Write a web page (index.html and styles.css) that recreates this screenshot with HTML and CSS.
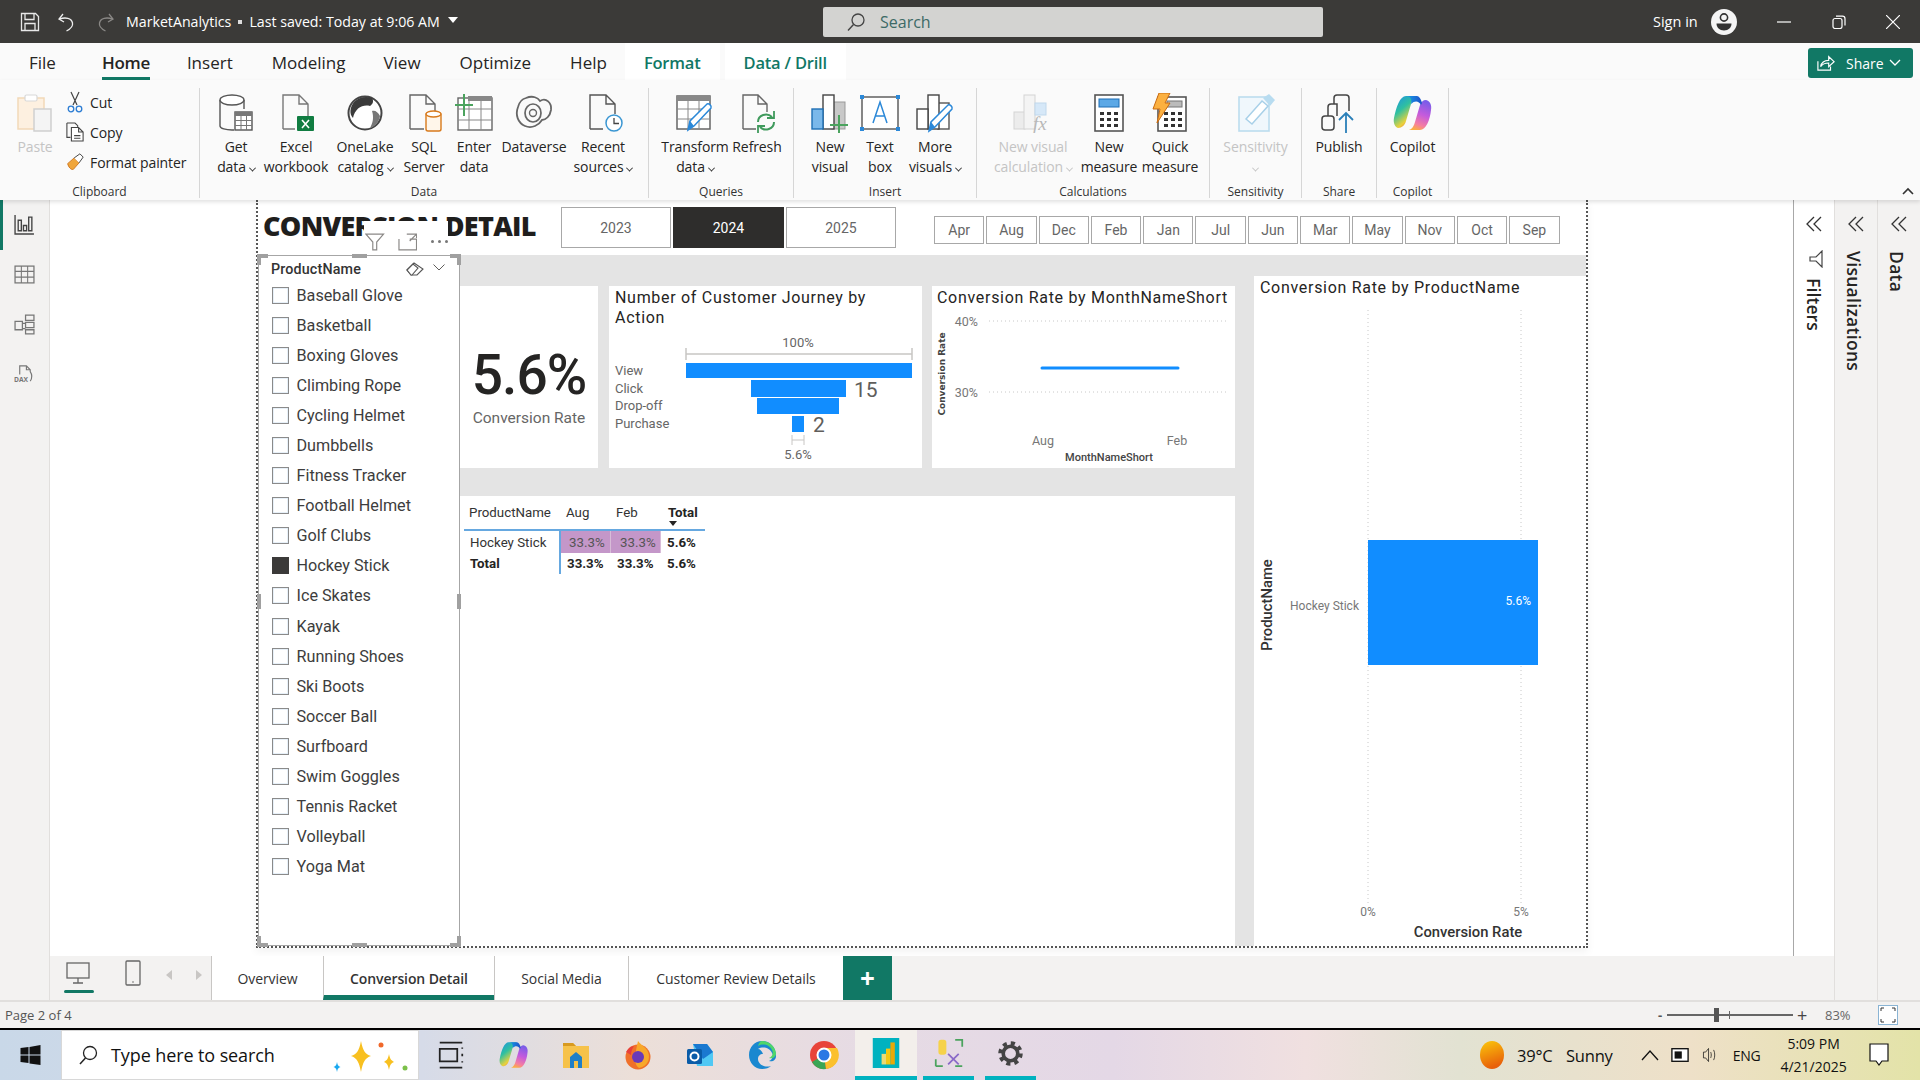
FILE: index.html
```html
<!DOCTYPE html>
<html lang="en">
<head>
<meta charset="utf-8">
<title>MarketAnalytics</title>
<link rel="stylesheet" href="styles.css">
</head>
<body>
<svg class="defs" width="0" height="0" aria-hidden="true">
  <defs>
    <linearGradient id="cpL" x1="0" y1="0" x2="0.6" y2="1"><stop offset="0" stop-color="#1b8fe8"/><stop offset=".45" stop-color="#2fc0a0"/><stop offset=".8" stop-color="#e9d23c"/><stop offset="1" stop-color="#f0713a"/></linearGradient>
    <linearGradient id="cpR" x1="0.6" y1="0" x2="0.3" y2="1"><stop offset="0" stop-color="#7a5ce8"/><stop offset=".45" stop-color="#c55bdc"/><stop offset=".8" stop-color="#f57fa0"/><stop offset="1" stop-color="#fbb040"/></linearGradient>
    <linearGradient id="cpT" x1="0" y1="0" x2="1" y2="0"><stop offset="0" stop-color="#16a0e8"/><stop offset="1" stop-color="#1e50c8"/></linearGradient>
    <linearGradient id="sun" x1="0" y1="0" x2="0.3" y2="1"><stop offset="0" stop-color="#fbc80a"/><stop offset="1" stop-color="#e8600a"/></linearGradient>
    <symbol id="copilot" viewBox="0 0 40 40">
      <path d="M13 3h11c-3 1-5 4-6 8l-5 17c-1 4-4 7-8 7-3-1-5-5-4-10C3 14 7 3 13 3z" fill="url(#cpL)"/>
      <path d="M27 37H16c3-1 5-4 6-8l5-17c1-3 3-5 6-5 4 1 6 5 5 10-1 10-5 20-11 20z" fill="url(#cpR)"/>
      <path d="M13 3h11c2 0 4 3 5 7l-1 2c-2-4-6-5-10-1 1-4 0-8-5-8z" fill="url(#cpT)"/>
    </symbol>
  </defs>
</svg>
<div class="app">

  <header class="titlebar">
    <div class="tb-left">
      <svg class="ti ti-save" viewBox="0 0 20 20"><path d="M1.5 1.5h14l3 3v14h-17z M5 1.5v6h9v-6 M5 18.5v-7h10v7" fill="none" stroke="#e8e8e8" stroke-width="1.3"/></svg>
      <svg class="ti ti-undo" viewBox="0 0 20 20"><path d="M6 2 2 7l5 3 M2.5 7c6-2 12-1 13 4 .6 3-2 6-6 8" fill="none" stroke="#eee" stroke-width="1.3"/></svg>
      <svg class="ti ti-redo" viewBox="0 0 20 20"><path d="M14 2l4 5-5 3 M17.500 7c-6-2-12-1-13 4-.6 3 2 6 6 8" fill="none" stroke="#8a8886" stroke-width="1.3"/></svg>
      <span class="doc-title">MarketAnalytics<i class="dot"></i>Last saved: Today at 9:06 AM</span>
      <i class="caret"></i>
    </div>
    <div class="searchbox">
      <svg class="search-ic" viewBox="0 0 20 20"><circle cx="12" cy="8" r="6" fill="none" stroke="#444" stroke-width="1.3"/><path d="M7.500 12.500 2 18.500" stroke="#444" stroke-width="1.4"/></svg>
      <span>Search</span>
    </div>
    <div class="tb-right">
      <span class="signin">Sign in</span>
      <svg class="avatar" viewBox="0 0 26 26"><circle cx="13" cy="13" r="13" fill="#f5f5f5"/><circle cx="13" cy="8.500" r="3.600" fill="none" stroke="#333" stroke-width="1.600"/><path d="M5.500 14.500h15c0 4-3 7-7.500 7s-7.500-3-7.500-7z" fill="#333"/></svg>
      <svg class="win win-min" viewBox="0 0 14 14"><path d="M0 7h14" stroke="#fff" stroke-width="1.200"/></svg>
      <svg class="win win-res" viewBox="0 0 14 14"><rect x="1" y="3.500" width="9" height="10" rx="2" fill="none" stroke="#fff" stroke-width="1.200"/><path d="M4 1.200h6.500c1.500 0 2.500 1 2.500 2.500v6.800" fill="none" stroke="#fff" stroke-width="1.200"/></svg>
      <svg class="win win-cls" viewBox="0 0 14 14"><path d="M0 0l14 14M14 0 0 14" stroke="#fff" stroke-width="1.200"/></svg>
    </div>
  </header>

  <nav class="tabs">
    <span class="tab t-file">File</span>
    <span class="tab t-home">Home</span>
    <span class="tab">Insert</span>
    <span class="tab t-mod">Modeling</span>
    <span class="tab">View</span>
    <span class="tab">Optimize</span>
    <span class="tab t-help">Help</span>
    <span class="tab t-ctx">Format</span>
    <span class="tab t-ctx">Data / Drill</span>
    <span class="share">
      <svg viewBox="0 0 20 20"><path d="M1 8v10h14v-4" fill="none" stroke="#fff" stroke-width="1.300"/><path d="M4 14c1-5 5-7 9-7V3l6 5.500L13 14v-4c-4 0-7 1-9 4z" fill="none" stroke="#fff" stroke-width="1.300"/></svg>
      <b>Share</b>
      <svg class="share-chev" viewBox="0 0 12 8"><path d="M1 1l5 5 5-5" fill="none" stroke="#fff" stroke-width="1.300"/></svg>
    </span>
  </nav>

  <section class="ribbon">
    <div class="group g-clip">
      <div class="btns clip-btns">
        <div class="rb w48 disabled">
          <svg class="ri" viewBox="0 0 40 40"><rect x="3" y="5" width="26" height="31" fill="#fdf0e0" stroke="#f2d9b8" stroke-width="1.500"/><rect x="10" y="2" width="12" height="6" rx="1.500" fill="#fff" stroke="#d8d8d8" stroke-width="1.200"/><rect x="19" y="16" width="17" height="22" fill="#f4f4f4" stroke="#cfcfcf" stroke-width="1.500"/></svg>
          <span>Paste</span>
        </div>
        <div class="clip-col">
          <div class="clip-row">
            <svg viewBox="0 0 18 22"><path d="M5 1l6 13M13 1 7 14" stroke="#444" stroke-width="1.200" fill="none"/><circle cx="5" cy="18" r="2.800" fill="none" stroke="#2b7cd3" stroke-width="1.300"/><circle cx="13" cy="18" r="2.800" fill="none" stroke="#2b7cd3" stroke-width="1.300"/></svg>
            <span>Cut</span>
          </div>
          <div class="clip-row">
            <svg viewBox="0 0 20 22"><path d="M1 1h9l3 3v2M1 1v16h4" fill="none" stroke="#444" stroke-width="1.200"/><path d="M6 6h8l5 5v10H6z M14 6v5h5 M9 15h7M9 18h7" fill="#fff" stroke="#444" stroke-width="1.200"/></svg>
            <span>Copy</span>
          </div>
          <div class="clip-row">
            <svg viewBox="0 0 22 22"><path d="M2 13l8-7 6 6-7 8c-3 1-6-3-7-7z" fill="#f0a63c" stroke="#c86a10" stroke-width="1"/><path d="M10 6l7-5 4 4-5 7" fill="#fff" stroke="#444" stroke-width="1.200"/></svg>
            <span>Format painter</span>
          </div>
        </div>
      </div>
      <div class="glabel">Clipboard</div>
    </div>

    <div class="group g-data">
      <div class="btns">
        <div class="rb w58">
          <svg class="ri" viewBox="0 0 40 40"><path d="M4 7v26c0 2.500 6 4 12 4h2M28 16V7" fill="none" stroke="#555" stroke-width="1.400"/><ellipse cx="16" cy="7" rx="12" ry="5" fill="#fff" stroke="#555" stroke-width="1.400"/><rect x="19" y="19" width="17" height="18" fill="#fff" stroke="#555" stroke-width="1.400"/><rect x="19" y="19" width="17" height="4" fill="#777"/><path d="M19 27.500h17M19 32.500h17M25 23v14M30.500 23v14" stroke="#777"/></svg>
          <span>Get<br>data<i class="chev"></i></span>
        </div>
        <div class="rb w62">
          <svg class="ri" viewBox="0 0 40 40"><path d="M7 36V2h16l9 9v12M23 2v9h9M7 36h12" fill="none" stroke="#777" stroke-width="1.400"/><rect x="21" y="23" width="17" height="15" rx="1" fill="#107c41"/><path d="M26 27l7 8M33 27l-7 8" stroke="#fff" stroke-width="1.600"/></svg>
          <span>Excel<br>workbook</span>
        </div>
        <div class="rb w76">
          <svg class="ri" viewBox="0 0 40 40"><circle cx="20" cy="20" r="16.500" fill="#fff" stroke="#444" stroke-width="2"/><path d="M9 9c5-5 12-6 18-4 2 3 1 6-2 8C18 11 10 15 8 25 4 21 5 14 9 9z" fill="#3a3a3a"/><path d="M27 18c3-1 6 1 8 5-1 6-5 10-10 12 3-5 4-11 2-17z" fill="#777"/></svg>
          <span>OneLake<br>catalog<i class="chev"></i></span>
        </div>
        <div class="rb w42">
          <svg class="ri" viewBox="0 0 40 40"><path d="M6 36V2h16l9 9v7M22 2v9h9M6 36h14" fill="none" stroke="#666" stroke-width="1.400"/><rect x="22" y="20" width="15" height="18" rx="2" fill="#fff6ea" stroke="#d87a1c" stroke-width="1.400"/><ellipse cx="29.500" cy="21" rx="7.500" ry="3" fill="#fff" stroke="#d87a1c" stroke-width="1.400"/></svg>
          <span>SQL<br>Server</span>
        </div>
        <div class="rb w58">
          <svg class="ri" viewBox="0 0 40 40"><rect x="4" y="5" width="34" height="32" fill="#fff" stroke="#666" stroke-width="1.400"/><rect x="14" y="3" width="24" height="5" fill="#888"/><path d="M4 16h34M4 27h34M15 8v29M27 8v29" stroke="#888"/><path d="M10 1v22M1 12h18" stroke="#4ba35e" stroke-width="2"/></svg>
          <span>Enter<br>data</span>
        </div>
        <div class="rb w62">
          <svg class="ri" viewBox="0 0 40 40"><path d="M12 5c7-3 12 0 14 3 6-4 12 2 11 9-1 6-5 10-9 10-3 5-10 9-17 6C4 30 1 22 4 14 5 10 8 6 12 5z" fill="none" stroke="#666" stroke-width="1.800"/><ellipse cx="19" cy="20" rx="8" ry="9" fill="none" stroke="#666" stroke-width="1.700"/><circle cx="19" cy="20" r="3.500" fill="none" stroke="#666" stroke-width="1.400"/></svg>
          <span>Dataverse</span>
        </div>
        <div class="rb w76">
          <svg class="ri" viewBox="0 0 40 40"><path d="M7 36V2h16l9 9v10M23 2v9h9M7 36h13" fill="none" stroke="#555" stroke-width="1.400"/><circle cx="31" cy="30" r="8" fill="#fff" stroke="#3a96d2" stroke-width="1.500"/><path d="M31 25v5.500h5" fill="none" stroke="#444" stroke-width="1.300"/></svg>
          <span>Recent<br>sources<i class="chev"></i></span>
        </div>
      </div>
      <div class="glabel">Data</div>
    </div>

    <div class="group g-query">
      <div class="btns">
        <div class="rb w76">
          <svg class="ri" viewBox="0 0 40 40"><rect x="2" y="3" width="33" height="33" fill="#fff" stroke="#666" stroke-width="1.500"/><rect x="2" y="3" width="33" height="5" fill="#888"/><path d="M2 16h33M2 26h33M13 8v28M24 8v28" stroke="#888"/><path d="M13 37l2-9 17-17c2-1 5 2 4 4L19 33z" fill="#fff" stroke="#2b88d8" stroke-width="1.500"/><path d="M13 37l2-9 4 5z" fill="#2b88d8"/></svg>
          <span>Transform<br>data<i class="chev"></i></span>
        </div>
        <div class="rb w48">
          <svg class="ri" viewBox="0 0 40 40"><path d="M6 36V2h15l9 9v8M21 2v9h9M6 36h13" fill="none" stroke="#666" stroke-width="1.400"/><path d="M21 29c0-7 9-10 14-5M37 29c0 7-9 10-14 5" fill="none" stroke="#3f9a5c" stroke-width="2"/><path d="M37 18v7h-7M21 40v-7h7" fill="none" stroke="#3f9a5c" stroke-width="1.800"/></svg>
          <span>Refresh</span>
        </div>
      </div>
      <div class="glabel">Queries</div>
    </div>

    <div class="group g-insert">
      <div class="btns">
        <div class="rb w50">
          <svg class="ri" viewBox="0 0 40 40"><rect x="22" y="9" width="13" height="27" fill="#c8c8c8" stroke="#999"/><rect x="13" y="2" width="11" height="34" fill="#fff" stroke="#444" stroke-width="1.400"/><rect x="2" y="16" width="11" height="20" fill="#7ab8ea" stroke="#1f6fb5" stroke-width="1.400"/><path d="M29 22v18M20 32h18" stroke="#4ba35e" stroke-width="2"/></svg>
          <span>New<br>visual</span>
        </div>
        <div class="rb w50">
          <svg class="ri" viewBox="0 0 40 40"><rect x="2" y="4" width="36" height="32" fill="#fff" stroke="#555" stroke-width="1.400"/><path d="M13 30l7-21 7 21M15.500 23h9" fill="none" stroke="#2b88d8" stroke-width="1.500"/><path d="M0 2h4v4H0zM36 2h4v4h-4zM0 34h4v4H0zM36 34h4v4h-4z" fill="#2b88d8"/></svg>
          <span>Text<br>box</span>
        </div>
        <div class="rb w60">
          <svg class="ri" viewBox="0 0 40 40"><rect x="23" y="10" width="11" height="26" fill="#fff" stroke="#555" stroke-width="1.400"/><rect x="13" y="2" width="11" height="34" fill="#fff" stroke="#444" stroke-width="1.400"/><rect x="2" y="16" width="11" height="20" fill="#fff" stroke="#444" stroke-width="1.400"/><path d="M14 38l2-9 17-17c2-1 5 2 4 4L20 34z" fill="#fff" stroke="#2b88d8" stroke-width="1.500"/><path d="M14 38l2-9 4 5z" fill="#2b88d8"/></svg>
          <span>More<br>visuals<i class="chev"></i></span>
        </div>
      </div>
      <div class="glabel">Insert</div>
    </div>

    <div class="group g-calc">
      <div class="btns">
        <div class="rb w96 disabled">
          <svg class="ri" viewBox="0 0 40 40"><rect x="1" y="19" width="11" height="17" fill="#ececec" stroke="#d4d4d4"/><rect x="11" y="2" width="11" height="34" fill="#f4f4f4" stroke="#d4d4d4"/><rect x="22" y="10" width="11" height="12" fill="#d6e8f8" stroke="#c0d8ec"/><text class="fx" x="20" y="37">fx</text></svg>
          <span>New visual<br>calculation<i class="chev"></i></span>
        </div>
        <div class="rb w56">
          <svg class="ri" viewBox="0 0 40 40"><rect x="6" y="2" width="28" height="36" fill="#fff" stroke="#555" stroke-width="1.600"/><rect x="10" y="6" width="20" height="8" fill="#5ba8e6" stroke="#1f6fb5"/><path d="M11 19h4v3h-4zM18 19h4v3h-4zM25 19h4v3h-4zM11 25h4v3h-4zM18 25h4v3h-4zM25 25h4v3h-4zM11 31h4v3h-4zM18 31h4v3h-4zM25 31h4v3h-4z" fill="#333"/></svg>
          <span>New<br>measure</span>
        </div>
        <div class="rb w66">
          <svg class="ri" viewBox="0 0 40 40"><rect x="8" y="4" width="28" height="34" fill="#fff" stroke="#555" stroke-width="1.600"/><rect x="17" y="8" width="15" height="6" fill="#bbb" stroke="#777"/><path d="M14 19h4v3h-4zM21 19h4v3h-4zM28 19h4v3h-4zM14 25h4v3h-4zM21 25h4v3h-4zM28 25h4v3h-4zM14 31h4v3h-4zM21 31h4v3h-4zM28 31h4v3h-4z" fill="#333"/><path d="M9 0h11l-5 10h5L7 30l3-14H3z" fill="#fbb040" stroke="#c86a10"/></svg>
          <span>Quick<br>measure</span>
        </div>
      </div>
      <div class="glabel">Calculations</div>
    </div>

    <div class="group g-sens">
      <div class="btns">
        <div class="rb w92 disabled">
          <svg class="ri" viewBox="0 0 40 40"><rect x="3" y="4" width="30" height="34" fill="#f0f7fc" stroke="#bcdcee" stroke-width="1.600"/><path d="M10 26 26 8l6 5-16 18z" fill="#fff" stroke="#a8d0e8" stroke-width="1.500"/><path d="M27 5l6-4 6 6-5 6z" fill="#b8dcf0"/></svg>
          <span>Sensitivity<br><i class="chev chev-solo"></i></span>
        </div>
      </div>
      <div class="glabel">Sensitivity</div>
    </div>

    <div class="group g-share">
      <div class="btns">
        <div class="rb w75">
          <svg class="ri" viewBox="0 0 40 40"><rect x="3" y="23" width="12" height="14" rx="3" fill="none" stroke="#444" stroke-width="1.500"/><path d="M9 23v-9c0-2 1-3 3-3h6v12M15 11V5c0-2 1-3 3-3h9c2 0 3 1 3 3v13" fill="none" stroke="#444" stroke-width="1.500"/><path d="M27 41V20M20 27l7-7 7 7" fill="none" stroke="#2a7fb8" stroke-width="1.800"/></svg>
          <span>Publish</span>
        </div>
      </div>
      <div class="glabel">Share</div>
    </div>

    <div class="group g-copilot">
      <div class="btns">
        <div class="rb w72">
          <svg class="ri"><use href="#copilot"/></svg>
          <span>Copilot</span>
        </div>
      </div>
      <div class="glabel">Copilot</div>
    </div>
    <svg class="collapse" viewBox="0 0 12 8"><path d="M1 7l5-5 5 5" fill="none" stroke="#333" stroke-width="1.600"/></svg>
  </section>

  <main class="main">
    <aside class="rail">
      <div class="rail-item active"><svg viewBox="0 0 20 20"><path d="M1 1v18h18" fill="none" stroke="#444" stroke-width="1.300"/><path d="M4 6h3v10H4zM9 11h3v5H9zM14 3h3v13h-3z" fill="none" stroke="#444" stroke-width="1.300"/></svg></div>
      <div class="rail-item"><svg viewBox="0 0 20 20"><rect x="1" y="2" width="18" height="16" fill="none" stroke="#777" stroke-width="1.200"/><path d="M1 7h18M1 12.500h18M7 2v16M13 2v16" stroke="#777"/></svg></div>
      <div class="rail-item"><svg viewBox="0 0 20 20"><path d="M1 7h7v8H1zM11 1h8v5h-8zM11 8h8v5h-8zM11 15h8v4h-8zM8 9h3M8 14h3" fill="none" stroke="#777" stroke-width="1.200"/></svg></div>
      <div class="rail-item"><svg viewBox="0 0 22 22"><path d="M6 11V2h7l4 4v2c2 3 2 7 0 10M13 2v4h4" fill="none" stroke="#777" stroke-width="1.200"/><text class="dax" x="0" y="19">DAX</text></svg></div>
    </aside>

    <div class="center">
      <div class="upper">
        <div class="canvas">
          <div class="page">
            <div class="page-top">
              <h1 class="page-title">CONVERSION DETAIL</h1>
              <div class="years">
                <span class="yr">2023</span><span class="yr on">2024</span><span class="yr">2025</span>
              </div>
              <div class="months">
                <span>Apr</span><span>Aug</span><span>Dec</span><span>Feb</span><span>Jan</span><span>Jul</span><span>Jun</span><span>Mar</span><span>May</span><span>Nov</span><span>Oct</span><span>Sep</span>
              </div>
            </div>
            <div class="page-body">
              <section class="slicer">
                <div class="hover-head">
                  <svg viewBox="0 0 20 18"><path d="M1 1h18l-7 8v8H8V9z" fill="#fff" stroke="#8a8886" stroke-width="1.200"/></svg>
                  <svg viewBox="0 0 20 18"><path d="M1 6v11h18V6H12M9 1h10v4M19 1l-7 7" fill="none" stroke="#8a8886" stroke-width="1.200"/></svg>
                  <span class="dots"><i></i><i></i><i></i></span>
                </div>
                <i class="h h-tl"></i><i class="h h-tr"></i><i class="h h-bl"></i><i class="h h-br"></i><i class="h h-t"></i><i class="h h-b"></i><i class="h h-l"></i><i class="h h-r"></i>
                <div class="sl-head">
                  <span>ProductName</span>
                  <svg class="eraser" viewBox="0 0 18 14"><path d="M1 8l7-7 9 6-6 6H5z" fill="none" stroke="#555" stroke-width="1.100"/><path d="M1 8l6-6 5 4-6 7H5z" fill="#fff" stroke="#555" stroke-width="1.100"/></svg>
                  <svg class="sl-chev" viewBox="0 0 12 7"><path d="M.5.500 6 6l5.500-5.500" fill="none" stroke="#605e5c"/></svg>
                </div>
                <ul class="sl-list">
                  <li><i class="cb"></i>Baseball Glove</li>
                  <li><i class="cb"></i>Basketball</li>
                  <li><i class="cb"></i>Boxing Gloves</li>
                  <li><i class="cb"></i>Climbing Rope</li>
                  <li><i class="cb"></i>Cycling Helmet</li>
                  <li><i class="cb"></i>Dumbbells</li>
                  <li><i class="cb"></i>Fitness Tracker</li>
                  <li><i class="cb"></i>Football Helmet</li>
                  <li><i class="cb"></i>Golf Clubs</li>
                  <li><i class="cb cb-on"></i>Hockey Stick</li>
                  <li><i class="cb"></i>Ice Skates</li>
                  <li><i class="cb"></i>Kayak</li>
                  <li><i class="cb"></i>Running Shoes</li>
                  <li><i class="cb"></i>Ski Boots</li>
                  <li><i class="cb"></i>Soccer Ball</li>
                  <li><i class="cb"></i>Surfboard</li>
                  <li><i class="cb"></i>Swim Goggles</li>
                  <li><i class="cb"></i>Tennis Racket</li>
                  <li><i class="cb"></i>Volleyball</li>
                  <li><i class="cb"></i>Yoga Mat</li>
                </ul>
              </section>

              <div class="stage">
                <div class="stage-left">
                  <div class="top-row">
                    <section class="card kpi">
                      <div class="kpi-val">5.6%</div>
                      <div class="kpi-lab">Conversion Rate</div>
                    </section>
                    <section class="card funnel">
                      <h2 class="vt">Number of Customer Journey by<br>Action</h2>
                      <svg class="chart" viewBox="0 0 313 140" width="313" height="140">
                        <text class="c-lab mid" x="189" y="14">100%</text>
                        <path d="M77 26h226M77 20v12M303 20v12" stroke="#c8c6c4" stroke-width="1.500" fill="none"/>
                        <rect class="bar" x="77" y="35" width="226" height="15"/>
                        <rect class="bar" x="142" y="52" width="95" height="17"/>
                        <rect class="bar" x="148" y="70" width="82" height="16"/>
                        <rect class="bar" x="183" y="88" width="12" height="16"/>
                        <text class="c-lab" x="6" y="42">View</text>
                        <text class="c-lab" x="6" y="60">Click</text>
                        <text class="c-lab" x="6" y="77">Drop-off</text>
                        <text class="c-lab" x="6" y="95">Purchase</text>
                        <text class="c-val" x="245" y="62">15</text>
                        <text class="c-val" x="204" y="97">2</text>
                        <path d="M183 112h12M183 107v10M195 107v10" stroke="#c8c6c4" fill="none"/>
                        <text class="c-lab mid" x="189" y="126">5.6%</text>
                      </svg>
                    </section>
                    <section class="card linec">
                      <h2 class="vt">Conversion Rate by MonthNameShort</h2>
                      <svg class="chart" viewBox="0 0 303 161" width="303" height="161">
                        <text class="c-tick end" x="46" y="14">40%</text>
                        <text class="c-tick end" x="46" y="85">30%</text>
                        <path class="grid" d="M57 14h239M57 85h239"/>
                        <path d="M110 61h136" stroke="#118dff" stroke-width="3" stroke-linecap="round"/>
                        <text class="c-axis-w mid" transform="translate(10 67) rotate(-90)">Conversion Rate</text>
                        <text class="c-tick mid" x="111" y="133">Aug</text>
                        <text class="c-tick mid" x="245" y="133">Feb</text>
                        <text class="c-axis mid" x="177" y="150">MonthNameShort</text>
                      </svg>
                    </section>
                  </div>
                  <section class="card matrix">
                    <div class="mx">
                      <span class="mx-c mx-h">ProductName</span><span class="mx-c mx-h m2">Aug</span><span class="mx-c mx-h">Feb</span><span class="mx-c mx-h mx-t">Total<i class="sort"></i></span>
                      <span class="mx-c r1">Hockey Stick</span><span class="mx-c r1 m2 heat">33.3%</span><span class="mx-c r1 heat">33.3%</span><span class="mx-c r1 mx-b">5.6%</span>
                      <span class="mx-c mx-b">Total</span><span class="mx-c mx-b m2">33.3%</span><span class="mx-c mx-b">33.3%</span><span class="mx-c mx-b">5.6%</span>
                    </div>
                  </section>
                </div>
                <section class="card prodbar">
                  <h2 class="vt">Conversion Rate by ProductName</h2>
                  <svg class="chart" viewBox="0 0 332 649" width="332" height="649">
                    <path class="grid" d="M114 13v595M267 13v595"/>
                    <rect class="bar" x="114" y="243" width="170" height="125"/>
                    <text class="c-white end" x="277" y="304">5.6%</text>
                    <text class="c-tick end small" x="105" y="309">Hockey Stick</text>
                    <text class="c-axis2 mid" transform="translate(13 308) rotate(-90)">ProductName</text>
                    <text class="c-tick mid small" x="114" y="615">0%</text>
                    <text class="c-tick mid small" x="267" y="615">5%</text>
                    <text class="c-axis2 mid" x="214" y="635">Conversion Rate</text>
                  </svg>
                </section>
              </div>
            </div>
          </div>
        </div>
        <aside class="filters">
          <svg class="dchev" viewBox="0 0 16 16"><path d="M8 1 1 8l7 7M15 1 8 8l7 7" fill="none" stroke="#333" stroke-width="1.300"/></svg>
          <svg class="p-fun" viewBox="0 0 14 18"><path d="M13 1v16L7 11H1V7h6z" fill="none" stroke="#444" stroke-width="1.200"/></svg>
          <span class="vtext">Filters</span>
        </aside>
      </div>
      <div class="pagebar">
        <div class="view-ic v-desk">
          <svg viewBox="0 0 24 24"><rect x="1" y="2" width="22" height="15" fill="none" stroke="#666" stroke-width="1.300"/><path d="M12 17v5M7 22h10" stroke="#666" stroke-width="1.300"/></svg>
        </div>
        <div class="view-ic">
          <svg class="phone" viewBox="0 0 16 26"><rect x="1" y="1" width="14" height="24" rx="1" fill="none" stroke="#666" stroke-width="1.300"/><circle cx="8" cy="22" r=".8" fill="#666"/></svg>
        </div>
        <div class="arrows"><i class="al"></i><i class="ar"></i></div>
        <span class="ptab w112">Overview</span>
        <span class="ptab w171 on">Conversion Detail</span>
        <span class="ptab w134">Social Media</span>
        <span class="ptab w215">Customer Review Details</span>
        <span class="padd">+</span>
      </div>
    </div>

    <aside class="pane">
      <svg class="dchev" viewBox="0 0 16 16"><path d="M8 1 1 8l7 7M15 1 8 8l7 7" fill="none" stroke="#333" stroke-width="1.300"/></svg>
      <span class="vtext v2">Visualizations</span>
    </aside>
    <aside class="pane">
      <svg class="dchev" viewBox="0 0 16 16"><path d="M8 1 1 8l7 7M15 1 8 8l7 7" fill="none" stroke="#333" stroke-width="1.300"/></svg>
      <span class="vtext v2">Data</span>
    </aside>
  </main>

  <footer class="status">
    <span class="pageno">Page 2 of 4</span>
    <div class="zoomctl">
      <span class="z-m">-</span>
      <div class="slider"><i class="tick"></i><i class="thumb"></i></div>
      <span class="z-p">+</span>
      <span class="z-v">83%</span>
      <svg class="fit" viewBox="0 0 20 20"><rect x=".5" y=".5" width="19" height="19" fill="#fff" stroke="#8ab4d4"/><path d="M3 6V3h3M14 3h3v3M3 14v3h3M14 17h3v-3" fill="none" stroke="#333"/></svg>
    </div>
  </footer>

  <footer class="taskbar">
    <div class="tk-start"><svg viewBox="0 0 20 20"><path d="M0 3l8-1v7.500H0zM9 2l11-2v9.500H9zM0 10.500h8V18l-8-1zM9 10.500h11V20L9 18.500z" fill="#111"/></svg></div>
    <div class="tk-search">
      <svg class="tk-s" viewBox="0 0 20 20"><circle cx="12" cy="8" r="6.500" fill="none" stroke="#222" stroke-width="1.300"/><path d="M7.500 13 2 19" stroke="#222" stroke-width="1.500"/></svg>
      <span>Type here to search</span>
      <svg class="spark" viewBox="0 0 78 36"><path d="M30 1c2 10 4 13 10 15-6 2-8 6-10 16-2-10-4-14-10-16 6-2 8-5 10-15z" fill="#f8c020"/><path d="M58 14c1 5 2 6 5 8-3 1-4 3-5 8-1-5-2-7-5-8 3-2 4-3 5-8z" fill="#f8c020"/><path d="M6 22c.6 3 1 4 3.500 5C7 28 6.600 29 6 32c-.6-3-1-4-3.500-5C5 26 5.400 25 6 22z" fill="#18a8f0"/><circle cx="50" cy="5" r="2.500" fill="#f0682a"/><circle cx="74" cy="28" r="2.500" fill="#7cc04a"/></svg>
    </div>
    <div class="tk-apps">
      <div class="tk-app tv"><svg viewBox="0 0 24 24"><path d="M3 2h18M3 22h18M3 7h14v10H3z M21 6v1M21 11v2M21 17v1" fill="none" stroke="#222" stroke-width="1.400"/></svg></div>
      <div class="tk-app"><svg class="tk-big"><use href="#copilot"/></svg></div>
      <div class="tk-app"><svg viewBox="0 0 30 30"><path d="M2 3h10l3 3h13v22H2z" fill="#f6c24a"/><path d="M2 3h10l3 3H2z" fill="#d89a20"/><path d="M9 28V17l6-5 6 5v11h-4v-7h-4v7z" fill="#1f7fc8"/></svg></div>
      <div class="tk-app"><svg viewBox="0 0 30 30"><circle cx="15" cy="17" r="12.500" fill="#f0702a"/><path d="M15 1c3 4 8 6 10 11 3 7-1 15-9 16C10 24 12 14 15 1z" fill="#f8a82a"/><circle cx="15" cy="17" r="6" fill="#6a3ab8"/><path d="M3 12c2-4 5-6 8-6-2 3-3 6-3 9z" fill="#e8403a"/></svg></div>
      <div class="tk-app"><svg viewBox="0 0 30 30"><path d="M8 4h14l6 8v14H12z" fill="#50c8f4"/><path d="M8 4h14l6 8-10 7z" fill="#1a78d0"/><rect x="2" y="9" width="15" height="15" rx="1.500" fill="#0a5ca8"/><circle cx="9.500" cy="16.500" r="4" fill="none" stroke="#fff" stroke-width="2"/></svg></div>
      <div class="tk-app"><svg viewBox="0 0 30 30"><path d="M15 1C8 1 2 7 2 15c0 8 6 14 13 14 4 0 7-1 9-3-7 2-13-2-13-7 0-3 2-5 5-5-1-3-3-5-5-5 5-3 12-1 14 4 2 3 0 7-3 8 4 1 7-1 7-5C29 7 23 1 15 1z" fill="#1a88d0"/><path d="M15 1c7 0 13 5 14 12 0 4-3 6-7 5 3-1 5-5 3-8-2-5-9-7-14-4 1-3 2-5 4-5z" fill="#4fd66a"/></svg></div>
      <div class="tk-app"><svg viewBox="0 0 30 30"><circle cx="15" cy="15" r="14" fill="#e8443a"/><path d="M15 15 3 22a14 14 0 0 0 14 7z" fill="#3aa655"/><path d="M15 8h13a14 14 0 0 1-11 21l-2-14z" fill="#fbc02d"/><circle cx="15" cy="15" r="6.500" fill="#2b78e4" stroke="#fff" stroke-width="2"/></svg></div>
      <div class="tk-app pbi"><svg viewBox="0 0 30 34"><rect width="30" height="34" fill="#00b2bf"/><path d="M10 18h5v12h-5z" fill="#eadb74"/><path d="M15 12h5v18h-5z" fill="#f2c811"/><path d="M20 5h5v25h-5z" fill="#e8a908"/></svg></div>
      <div class="tk-app run"><svg viewBox="0 0 34 34"><rect x="5" y="2" width="9" height="17" rx="3" fill="#f6d24a"/><path d="M24 2h8v8M2 32v-8M2 32h8M32 32h-8" fill="none" stroke="#4ba35e" stroke-width="2"/><path d="M16 18l12 12M28 18 16 30" stroke="#8a6ac8" stroke-width="2"/></svg></div>
      <div class="tk-app run"><svg class="gear" viewBox="0 0 24 24"><circle cx="12" cy="12" r="10" fill="none" stroke="#444" stroke-width="3.500" stroke-dasharray="4 3.850"/><circle cx="12" cy="12" r="7" fill="none" stroke="#444" stroke-width="3.500"/></svg></div>
    </div>
    <div class="tk-tray">
      <svg class="sun" viewBox="0 0 24 28"><ellipse cx="12" cy="14" rx="12" ry="14" fill="url(#sun)"/></svg>
      <span class="tray-t w-temp">39°C</span><span class="tray-t">Sunny</span>
      <svg class="tr-ic tr-first" viewBox="0 0 18 12"><path d="M1 11l8-9 8 9" fill="none" stroke="#111" stroke-width="1.300"/></svg>
      <svg class="tr-ic" viewBox="0 0 20 16"><rect x="1" y="1" width="18" height="14" fill="#fff" stroke="#111" stroke-width="1.500"/><rect x="4" y="4" width="8" height="8" fill="#111"/></svg>
      <svg class="tr-ic" viewBox="0 0 20 22"><path d="M1 7h3l4-5v18l-4-5H1z" fill="none" stroke="#111"/><path d="M11 7c1 3 1 5 0 8M15 4c2 4 2 10 0 14" fill="none" stroke="#111"/></svg>
      <span class="tray-t eng">ENG</span>
      <div class="clock"><span>5:09 PM</span><span>4/21/2025</span></div>
      <svg class="notif" viewBox="0 0 20 24"><path d="M1 1h18v17h-6l-3 4-3-4H1z" fill="#fff" stroke="#111" stroke-width="1.200"/></svg>
    </div>
  </footer>
</div>
</body>
</html>
```
FILE: styles.css
```css
* { box-sizing: border-box; }
html, body { margin: 0; padding: 0; }
body { width: 1920px; height: 1080px; overflow: hidden; font-family: "Open Sans", "Liberation Sans", sans-serif; color: #252423; background: #fff; }
.defs { position: absolute; }
.app { display: flex; flex-direction: column; width: 1920px; height: 1080px; }
i { font-style: normal; display: block; }
h1, h2, ul { margin: 0; padding: 0; font-weight: normal; }
ul { list-style: none; }

/* title bar */
.titlebar { height: 43px; flex: none; background: #3b3a38; display: flex; align-items: center; color: #fff; position: relative; }
.tb-left { display: flex; align-items: center; width: 823px; height: 100%; }
.ti { width: 20px; height: 20px; flex: none; }
.ti-save { margin-left: 20px; }
.ti-undo { margin-left: 17px; }
.ti-redo { margin-left: 18px; }
.doc-title { margin-left: 11px; font-size: 14.200px; white-space: nowrap; display: flex; align-items: center; }
.dot { width: 4px; height: 4px; background: #ddd; margin: 0 7px; }
.caret { margin-left: 8px; width: 0; height: 0; border: 5px solid transparent; border-top: 6px solid #fff; border-bottom: 0; margin-top: -3px; }
.searchbox { width: 500px; height: 30px; background: #d3d3d1; border-radius: 2px; display: flex; align-items: center; padding-left: 23px; color: #3d6a66; font-size: 16px; }
.search-ic { width: 20px; height: 20px; margin-right: 14px; }
.tb-right { flex: 1; display: flex; align-items: center; padding-left: 330px; }
.signin { font-size: 14.500px; width: 58px; white-space: nowrap; }
.avatar { width: 26px; height: 26px; }
.win { width: 14px; height: 14px; flex: none; }
.win-min { margin-left: 40px; }
.win-res { margin-left: 41px; }
.win-cls { margin-left: 40px; }

/* ribbon tabs */
.tabs { height: 37px; flex: none; background: #fafafa; display: flex; align-items: stretch; padding-left: 29px; font-size: 17px; position: relative; }
.tab { display: flex; align-items: center; margin-right: 39px; white-space: nowrap; padding-top: 2px; }
.t-file { margin-right: 46px; }
.t-home { font-weight: 600; border-bottom: 3px solid #117865; padding-top: 5px; letter-spacing: -.3px; margin-right: 37px; }
.t-mod { margin-right: 38px; }
.t-help { margin-right: 18px; }
.t-ctx { background: #fff; color: #117865; font-weight: 600; padding: 2px 19px 0; margin-right: 5px; letter-spacing: -.2px; font-size: 16.500px; }
.share { position: absolute; left: 1808px; top: 5px; width: 105px; height: 30px; background: #117865; border-radius: 3px; color: #fff; display: flex; align-items: center; padding-left: 9px; font-size: 14px; }
.share svg { width: 18px; height: 18px; }
.share b { font-weight: 400; margin-left: 11px; }
.share svg.share-chev { width: 12px; height: 8px; margin-left: 5px; }

/* ribbon */
.ribbon { height: 120px; flex: none; background: #fafafa; display: flex; padding-top: 8px; position: relative; z-index: 3; box-shadow: 0 2px 4px rgba(0,0,0,.12); padding-bottom: 2px; font-size: 14px; }
.group { display: flex; flex-direction: column; height: 110px; border-right: 1px solid #d6d6d6; }
.g-clip { width: 200px; }
.g-data { width: 449px; }
.g-query { width: 145px; }
.g-insert { width: 183px; }
.g-calc { width: 233px; }
.g-sens { width: 92px; }
.g-share { width: 75px; }
.g-copilot { width: 72px; }
.btns { flex: 1; display: flex; padding-top: 5px; }
.g-data .btns { padding-left: 7px; }
.g-query .btns { padding-left: 8px; }
.g-insert .btns { padding-left: 11px; }
.g-calc .btns { padding-left: 8px; }
.clip-btns { padding-left: 11px; }
.glabel { height: 18px; text-align: center; font-size: 12px; line-height: 23px; color: #333; }
.rb { display: flex; flex-direction: column; align-items: center; line-height: 20px; white-space: nowrap; text-align: center; letter-spacing: -.1px; }
.rb span { display: block; margin-top: 4px; }
.ri { width: 40px; height: 40px; flex: none; display: block; }
.disabled { color: #c4c4c4; }
.w42 { width: 42px; } .w48 { width: 48px; } .w50 { width: 50px; } .w56 { width: 56px; } .w58 { width: 58px; } .w60 { width: 60px; } .w62 { width: 62px; } .w66 { width: 66px; } .w72 { width: 72px; } .w75 { width: 75px; } .w76 { width: 76px; } .w92 { width: 92px; } .w96 { width: 96px; }
.chev { display: inline-block; width: 5px; height: 5px; border-right: 1.300px solid #333; border-bottom: 1.300px solid #333; transform: rotate(45deg) translate(-1px, -1px); margin-left: 4px; }
.disabled .chev { border-color: #c4c4c4; }
.chev-solo { margin-left: 0; }
.fx { font-family: "Liberation Serif", serif; font-style: italic; font-size: 19px; fill: #b8b8b8; }
.clip-col { display: flex; flex-direction: column; margin-left: 7px; margin-top: -2px; gap: 8px; }
.clip-row { display: flex; align-items: center; height: 22px; white-space: nowrap; letter-spacing: -.1px; }
.clip-row svg { width: 18px; height: 22px; margin-right: 6px; flex: none; }
.collapse { position: absolute; width: 12px; height: 8px; left: 1902px; top: 107px; }

/* main */
.main { flex: 1; display: flex; min-height: 0; }
.rail { width: 50px; flex: none; background: #f3f2f1; border-right: 1px solid #e1dfdd; display: flex; flex-direction: column; }
.rail-item { height: 50px; display: flex; align-items: center; justify-content: center; padding-bottom: 2px; }
.rail-item svg { width: 21px; height: 21px; }
.rail-item.active { border-left: 3px solid #117865; padding-right: 3px; }
.dax { font-size: 7px; font-weight: 700; fill: #777; font-family: "Open Sans", sans-serif; }
.center { width: 1784px; flex: none; display: flex; flex-direction: column; }
.upper { height: 756px; display: flex; background: #fff; }
.canvas { width: 1743px; flex: none; padding-left: 206px; }
.page { width: 1332px; height: 748px; border-left: 2px dotted #555; border-right: 2px dotted #555; border-bottom: 2px dotted #555; display: flex; flex-direction: column; box-shadow: 0 4px 8px rgba(0,0,0,.05); }
.page-top { height: 55px; flex: none; display: flex; }
.page-title { width: 303px; flex: none; padding-left: 5px; font-family: "Open Sans", sans-serif; font-weight: 800; font-size: 27px; line-height: 51px; white-space: nowrap; letter-spacing: -.7px; color: #1f1e1d; }
.years { display: flex; gap: 2px; margin-top: 7px; height: 41px; }
.yr { width: 110px; border: 1px solid #a8a8a8; display: flex; align-items: center; justify-content: center; font-family: "Roboto", sans-serif; font-size: 14px; color: #666; background: #fff; }
.yr.on { background: #2e2d2c; color: #fff; border-color: #2e2d2c; width: 111px; }
.months { display: flex; gap: 2px; margin-left: 38px; margin-top: 16px; height: 28px; }
.months span { width: 50.300px; border: 1.500px solid #a8a8a8; display: flex; align-items: center; justify-content: center; font-family: "Roboto", sans-serif; font-size: 14px; color: #666; }
.page-body { flex: 1; min-height: 0; display: flex; }

/* slicer */
.slicer { width: 202px; flex: none; border: 1.500px solid #a6a6a6; position: relative; background: #fff; font-family: "Roboto", sans-serif; }
.hover-head { position: absolute; left: 105px; top: -35px; width: 84px; height: 34px; background: #fff; display: flex; align-items: center; padding: 7px 0 0 1px; gap: 13px; }
.hover-head svg { width: 20px; height: 18px; }
.dots { display: flex; gap: 4px; margin-left: 1px; }
.dots i { width: 3px; height: 3px; background: #777; border-radius: 50%; }
.h { position: absolute; background: #a0a0a0; }
.h-tl, .h-tr, .h-bl, .h-br { width: 11px; height: 11px; background: none; border: 4px solid #a0a0a0; }
.h-tl { left: -2px; top: -2px; border-right: 0; border-bottom: 0; }
.h-tr { right: -2px; top: -2px; border-left: 0; border-bottom: 0; }
.h-bl { left: -2px; bottom: -2px; border-right: 0; border-top: 0; }
.h-br { right: -2px; bottom: -2px; border-left: 0; border-top: 0; }
.h-t { left: 93px; top: -2px; width: 15px; height: 4px; }
.h-b { left: 93px; bottom: -2px; width: 15px; height: 4px; }
.h-l { left: -2px; top: 338px; width: 4px; height: 15px; }
.h-r { right: -2px; top: 338px; width: 4px; height: 15px; }
.sl-head { height: 24px; display: flex; align-items: center; padding-left: 12px; font-size: 14.300px; font-weight: 500; color: #333; margin-top: 1px; letter-spacing: .15px; }
.sl-head span { width: 132px; }
.eraser { width: 18px; height: 14px; margin-left: 3px; }
.sl-chev { width: 12px; height: 7px; margin-left: 9px; margin-top: -4px; }
.sl-list { padding-left: 12.500px; margin-top: -1px; }
.sl-list li { height: 30.100px; display: flex; align-items: center; font-size: 16.200px; color: #3d3d3d; white-space: nowrap; }
.cb { width: 17px; height: 17px; border: 1.500px solid #8a8a8a; box-shadow: inset 0 0 0 .5px #cfe2f2; margin-right: 8px; flex: none; }
.cb-on { background: #3b3a39; border-color: #3b3a39; box-shadow: none; }

/* stage */
.stage { flex: 1; min-width: 0; background: #e4e4e4; display: flex; gap: 19px; }
.stage-left { width: 775px; flex: none; padding-top: 31px; display: flex; flex-direction: column; gap: 28px; }
.top-row { display: flex; height: 182px; flex: none; }
.card { background: #fff; font-family: "Roboto", sans-serif; }
.kpi { width: 138px; margin-right: 11px; display: flex; flex-direction: column; align-items: center; padding-top: 52px; }
.kpi-val { font-size: 55px; font-weight: 500; line-height: 74px; color: #252423; height: 74px; letter-spacing: -1px; }
.kpi-lab { font-size: 15.500px; line-height: 20px; color: #666; margin-top: -4px; white-space: nowrap; }
.funnel { width: 313px; margin-right: 10px; }
.linec { width: 303px; }
.vt { font-size: 16px; line-height: 20px; padding: 2px 0 0 6px; letter-spacing: .7px; color: #252423; white-space: nowrap; font-weight: 400; }
.funnel .vt { height: 42px; }
.linec .vt { padding-left: 5px; letter-spacing: .7px; height: 21px; }
.chart { display: block; }
.bar { fill: #118dff; }
.chart text { font-family: "Roboto", sans-serif; dominant-baseline: central; }
.mid { text-anchor: middle; }
.end { text-anchor: end; }
.c-lab { font-size: 13px; fill: #666; }
.c-val { font-size: 21px; fill: #605e5c; }
.c-tick { font-size: 12.500px; fill: #777; }
.small { font-size: 12px; }
.chart .c-axis-w { font-family: "DejaVu Sans", sans-serif; font-size: 9px; font-weight: 700; fill: #444; }
.c-axis { font-size: 11px; font-weight: 500; fill: #444; }
.c-axis2 { font-size: 14.800px; font-weight: 500; fill: #333; }
.c-white { font-size: 12px; fill: #fff; }
.grid { stroke: #c8c8c8; stroke-dasharray: 1 3; fill: none; }
.matrix { flex: 1; padding: 0 0 0 4px; }
.mx { display: grid; grid-template-columns: 95px 52px 50px 44px; grid-template-rows: 35px 22px 21px; width: 241px; font-size: 13.300px; color: #333; }
.mx-c { display: flex; align-items: center; padding-left: 6px; white-space: nowrap; }
.mx-h { border-bottom: 2px solid #66a8e0; position: relative; padding-left: 5px; }
.m2 { border-left: 2px solid #66a8e0; padding-left: 6px; }
.mx-h.m2 { border-left: 0; padding-left: 7px; }
.r1.heat { background: #c497c9; color: #555; padding-left: 9px; border-right: 1px solid #d8bcd8; }
.r1.m2.heat { padding-left: 8px; }
.mx-b { font-weight: 700; color: #252423; }
.mx-t { font-weight: 700; color: #252423; padding-left: 7px; }
.sort { position: absolute; left: 8px; bottom: 3px; width: 0; height: 0; border: 4px solid transparent; border-top: 5px solid #252423; border-bottom: 0; }
.prodbar { width: 332px; flex: none; margin-top: 21px; }
.prodbar .vt { padding-left: 6px; letter-spacing: .7px; height: 21px; }

/* side panes */
.filters { flex: 1; border-left: 1px solid #a8a8a8; display: flex; flex-direction: column; align-items: center; padding-top: 16px; background: #fff; }
.pane { flex: 1; background: #f3f2f1; border-left: 1px solid #e1dfdd; display: flex; flex-direction: column; align-items: center; padding-top: 16px; }
.dchev { width: 16px; height: 16px; flex: none; }
.p-fun { width: 14px; height: 18px; margin-top: 18px; transform: translateX(2px); }
.vtext { writing-mode: vertical-rl; font-size: 17.500px; font-weight: 600; color: #252423; margin-top: 10px; white-space: nowrap; letter-spacing: .1px; }
.v2 { margin-top: 19px; font-size: 17.500px; margin-right: 4px; letter-spacing: .3px; }
.pagebar { height: 44px; flex: none; background: #f3f2f1; display: flex; align-items: stretch; }
.view-ic { width: 55px; display: flex; align-items: center; justify-content: center; position: relative; padding-bottom: 10px; flex: none; }
.view-ic svg { width: 24px; height: 24px; }
.view-ic svg.phone { width: 16px; height: 26px; }
.v-desk::after { content: ""; position: absolute; left: 14px; width: 30px; height: 3px; bottom: 7px; background: #117865; border-radius: 2px; }
.arrows { width: 51px; flex: none; display: flex; justify-content: space-between; align-items: center; padding: 0 9px 6px 6px; }
.al { width: 0; height: 0; border: 5px solid transparent; border-right: 6px solid #c8c6c4; border-left: 0; }
.ar { width: 0; height: 0; border: 5px solid transparent; border-left: 6px solid #c8c6c4; border-right: 0; }
.ptab { background: #fff; border-left: 1px solid #c8c6c4; display: flex; align-items: center; justify-content: center; font-size: 14px; color: #333; letter-spacing: -.1px; white-space: nowrap; flex: none; }
.ptab.on { font-weight: 600; border-bottom: 5px solid #117865; padding-top: 5px; }
.w112 { width: 112px; } .w134 { width: 134px; } .w171 { width: 171px; } .w215 { width: 215px; }
.padd { width: 49px; background: #117865; color: #fff; font-weight: 700; font-size: 26px; display: flex; align-items: center; justify-content: center; flex: none; line-height: 1; }

/* status */
.status { height: 30px; flex: none; background: #f3f2f1; border-top: 2px solid #e1dfdd; border-bottom: 2px solid #000; display: flex; align-items: center; justify-content: space-between; font-size: 13px; color: #555; padding-left: 5px; }
.zoomctl { display: flex; align-items: center; height: 100%; }
.z-m { font-weight: 700; width: 9px; }
.slider { width: 126px; height: 2px; background: #666; position: relative; }
.thumb { position: absolute; left: 47px; top: -6px; width: 5px; height: 14px; background: #555; }
.tick { position: absolute; left: 62px; top: -3px; width: 1px; height: 8px; background: #666; }
.z-p { font-size: 18px; width: 20px; padding-left: 4px; color: #444; line-height: 1; }
.z-v { width: 64px; padding-left: 12px; color: #666; }
.fit { width: 20px; height: 20px; margin-right: 22px; margin-left: 1px; }

/* taskbar */
.taskbar { height: 50px; flex: none; display: flex; align-items: stretch; background: linear-gradient(90deg, #c9d8e8 0%, #d6dbe8 22%, #ecdfd8 33%, #e6dbe4 45%, #e4d8e6 58%, #f0e0e0 68%, #e2e2d2 76%, #eee0c8 88%, #e3e3a8 100%); color: #111; }
.tk-start { width: 61px; flex: none; display: flex; align-items: center; justify-content: center; }
.tk-start svg { width: 21px; height: 20px; }
.tk-search { width: 358px; flex: none; background: #fff; border: 1px solid #d8d8d8; display: flex; align-items: center; padding-left: 16px; font-size: 18px; position: relative; }
.tk-s { width: 20px; height: 20px; margin-right: 13px; }
.tk-search span { letter-spacing: -.1px; white-space: nowrap; }
.spark { position: absolute; left: 269px; top: 9px; width: 78px; height: 36px; }
.tk-apps { display: flex; align-items: stretch; }
.tk-app { width: 62px; display: flex; align-items: center; justify-content: center; flex: none; position: relative; }
.tk-app svg { width: 30px; height: 30px; }
.tk-app svg.tk-big { width: 30px; height: 30px; }
.tk-app svg.gear { width: 25px; height: 25px; }
.tv { width: 64px; }
.tk-app.pbi { background: #f3efeb; border-bottom: 4px solid #00b2bf; }
.tk-app.run { border-bottom: 4px solid #00b2bf; width: 51px; margin-left: 6px; margin-right: 5px; }
.tk-tray { flex: 1; display: flex; align-items: center; padding-left: 439px; }
.sun { width: 24px; height: 28px; margin-right: 13px; flex: none; }
.tray-t { font-size: 16.500px; white-space: nowrap; letter-spacing: -.2px; }
.w-temp { width: 49px; }
.tr-ic { width: 18px; height: 16px; margin-left: 12px; flex: none; }
.tr-first { margin-left: 28px; }
.eng { font-size: 14px; margin-left: 14px; }
.clock { width: 90px; display: flex; flex-direction: column; align-items: center; font-size: 14px; line-height: 23px; margin-left: 8px; flex: none; }
.notif { width: 20px; height: 24px; margin-left: 10px; flex: none; }
```
